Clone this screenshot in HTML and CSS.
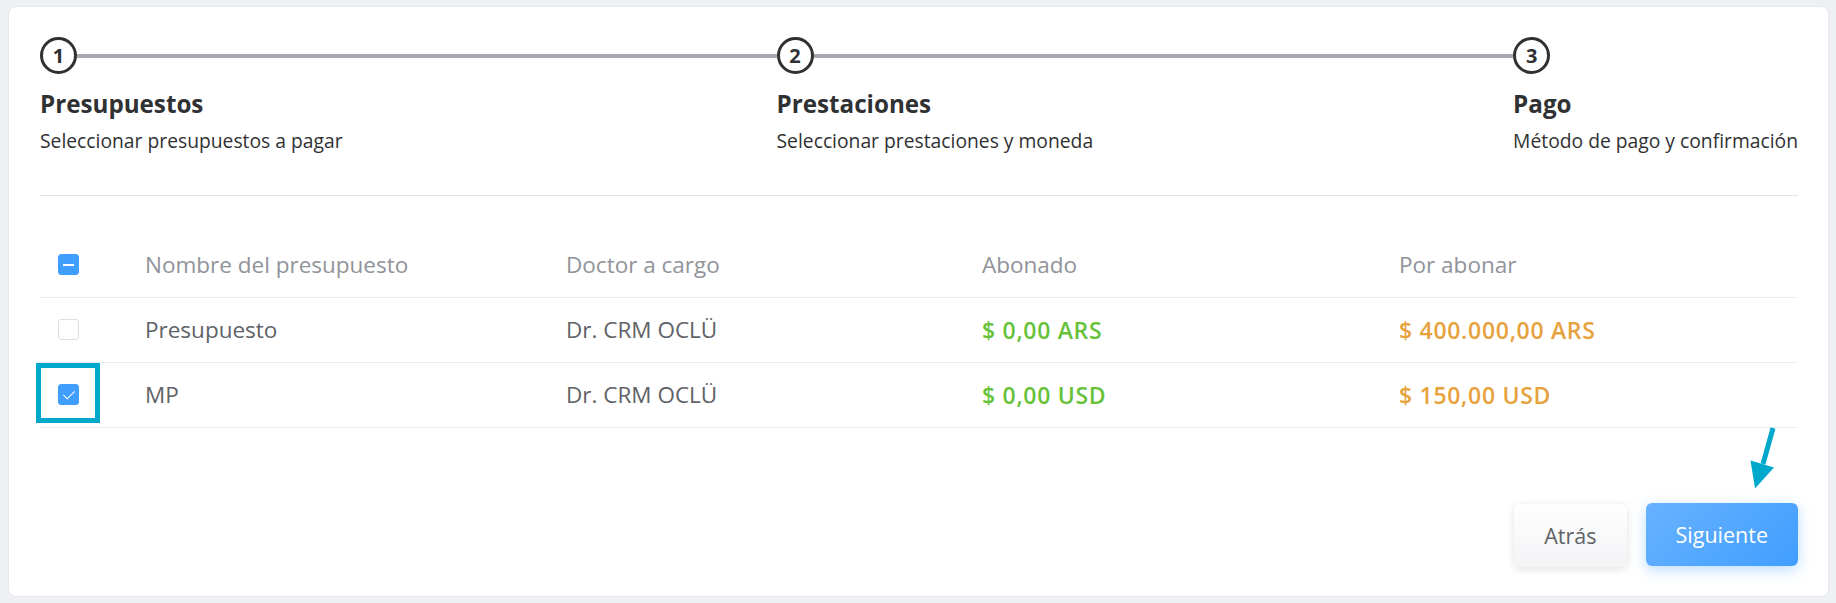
FILE: index.html
```html
<!DOCTYPE html>
<html lang="es">

<head>
    <meta charset="UTF-8">
    <meta name="viewport" content="width=device-width, initial-scale=1.0">
    <title>Pago de presupuestos</title>
    <link rel="stylesheet" href="styles.css">
</head>

<body>
    <div class="card">
        <div class="steps">
            <div class="step">
                <div class="step-head">
                    <span class="step-icon">1</span>
                    <span class="step-line"></span>
                </div>
                <div class="step-title">Presupuestos</div>
                <div class="step-desc">Seleccionar presupuestos a pagar</div>
            </div>
            <div class="step">
                <div class="step-head">
                    <span class="step-icon">2</span>
                    <span class="step-line"></span>
                </div>
                <div class="step-title">Prestaciones</div>
                <div class="step-desc">Seleccionar prestaciones y moneda</div>
            </div>
            <div class="step step-last">
                <div class="step-head">
                    <span class="step-icon">3</span>
                </div>
                <div class="step-title">Pago</div>
                <div class="step-desc">Método de pago y confirmación</div>
            </div>
        </div>

        <div class="divider"></div>

        <table class="budget-table">
            <colgroup>
                <col class="col-check">
                <col class="col-name">
                <col class="col-doctor">
                <col class="col-paid">
                <col class="col-due">
            </colgroup>
            <thead>
                <tr>
                    <th><span class="checkbox indeterminate"></span></th>
                    <th>Nombre del presupuesto</th>
                    <th>Doctor a cargo</th>
                    <th>Abonado</th>
                    <th>Por abonar</th>
                </tr>
            </thead>
            <tbody>
                <tr>
                    <td><span class="checkbox"></span></td>
                    <td>Presupuesto</td>
                    <td>Dr. CRM OCLÜ</td>
                    <td class="paid">$ 0,00 ARS</td>
                    <td class="due">$ 400.000,00 ARS</td>
                </tr>
                <tr>
                    <td><span class="checkbox checked"></span></td>
                    <td>MP</td>
                    <td>Dr. CRM OCLÜ</td>
                    <td class="paid">$ 0,00 USD</td>
                    <td class="due">$ 150,00 USD</td>
                </tr>
            </tbody>
        </table>

        <div class="actions">
            <button class="btn btn-back">Atrás</button>
            <button class="btn btn-next">Siguiente</button>
        </div>

        <!-- annotations over the screenshot -->
        <div class="highlight-box"></div>
        <svg class="hint-arrow" width="40" height="75" viewBox="0 0 40 75">
            <line x1="28" y1="8" x2="18" y2="44" stroke="#00a9cb" stroke-width="5" />
            <polygon points="5.5,40.5 29,47.5 10,68.5" fill="#00a9cb" />
        </svg>
    </div>
</body>

</html>
```
FILE: styles.css
```css
* {
    box-sizing: border-box;
}

body {
    margin: 6px 7px 6px 8px;
    background: #eef0f3;
    font-family: 'Open Sans', sans-serif;
    color: #303133;
}

.card {
    position: relative;
    height: 591px;
    background: #ffffff;
    border: 1px solid #e4e7ed;
    border-radius: 8px;
    padding: 30px 30px 30px 31px;
}

/* stepper */

.steps {
    display: flex;
}

.step {
    flex: 1 1 0;
    min-width: 0;
}

.step-last {
    flex: 0 0 auto;
}

.step-head {
    display: flex;
    align-items: center;
    height: 37px;
}

.step-icon {
    width: 37px;
    height: 37px;
    flex-shrink: 0;
    border: 3px solid #303133;
    border-radius: 50%;
    display: flex;
    align-items: center;
    justify-content: center;
    font-size: 20px;
    font-weight: 700;
    line-height: 1;
    color: #303133;
}

.step-line {
    flex: 1;
    height: 4px;
    background: #a6a8b0;
}

.step-title {
    margin-top: 15px;
    font-size: 24.2px;
    line-height: 29px;
    font-weight: 700;
    white-space: nowrap;
}

.step-desc {
    margin-top: 11px;
    font-size: 19.3px;
    line-height: 23px;
    white-space: nowrap;
}

.divider {
    margin-top: 43px;
    height: 1px;
    background: #e2e4ea;
}

/* table */

.budget-table {
    width: 100%;
    margin-top: 36px;
    border-collapse: collapse;
    table-layout: fixed;
    font-size: 22.5px;
}

.col-check {
    width: 95px;
}

.col-name {
    width: 421px;
}

.col-doctor {
    width: 416px;
}

.col-paid {
    width: 417px;
}

.budget-table th,
.budget-table td {
    height: 65px;
    padding: 0 10px;
    text-align: left;
    vertical-align: middle;
    border-bottom: 1px solid #ebeef5;
    white-space: nowrap;
}

.budget-table th {
    font-weight: 400;
    color: #909399;
}

.budget-table td {
    color: #606266;
}

.budget-table th:first-child,
.budget-table td:first-child {
    padding-left: 18px;
}

.budget-table td.paid,
.budget-table td.due {
    font-size: 23px;
    font-weight: 600;
    letter-spacing: 0.7px;
}

.budget-table td.paid {
    color: #67c23a;
}

.budget-table td.due {
    color: #e6a23c;
}

.checkbox {
    position: relative;
    display: block;
    width: 21px;
    height: 21px;
    border: 1px solid #dcdfe6;
    border-radius: 3px;
    background: #ffffff;
}

.checkbox.indeterminate,
.checkbox.checked {
    background: #409eff;
    border-color: #409eff;
}

.checkbox.indeterminate::after {
    content: "";
    position: absolute;
    left: 4px;
    right: 4px;
    top: 9px;
    height: 2px;
    background: #ffffff;
}

.checkbox.checked::after {
    content: "";
    position: absolute;
    left: 7px;
    top: 3px;
    width: 5px;
    height: 10px;
    border: 1px solid #ffffff;
    border-left: 0;
    border-top: 0;
    transform: rotate(45deg);
}

/* buttons */

.actions {
    display: flex;
    justify-content: flex-end;
    gap: 19px;
    margin-top: 76px;
}

.btn {
    height: 63px;
    padding: 0 30px;
    border: none;
    border-radius: 6px;
    font-family: 'Open Sans', sans-serif;
    font-size: 21.5px;
    cursor: pointer;
}

.btn-back {
    min-width: 112px;
    color: #606266;
    background: linear-gradient(180deg, #ffffff, #f2f3f5);
    box-shadow: 0 2px 8px rgba(0, 0, 0, 0.12);
}

.btn-next {
    min-width: 152px;
    margin-top: -1px;
    color: #ffffff;
    background: linear-gradient(135deg, #68b2ff, #409eff);
    box-shadow: 0 4px 14px rgba(64, 158, 255, 0.35);
}

/* annotations */

.highlight-box {
    position: absolute;
    left: 27px;
    top: 356px;
    width: 64px;
    height: 60px;
    border: 5px solid #00a9cb;
}

.hint-arrow {
    position: absolute;
    left: 1736px;
    top: 413px;
}
```
